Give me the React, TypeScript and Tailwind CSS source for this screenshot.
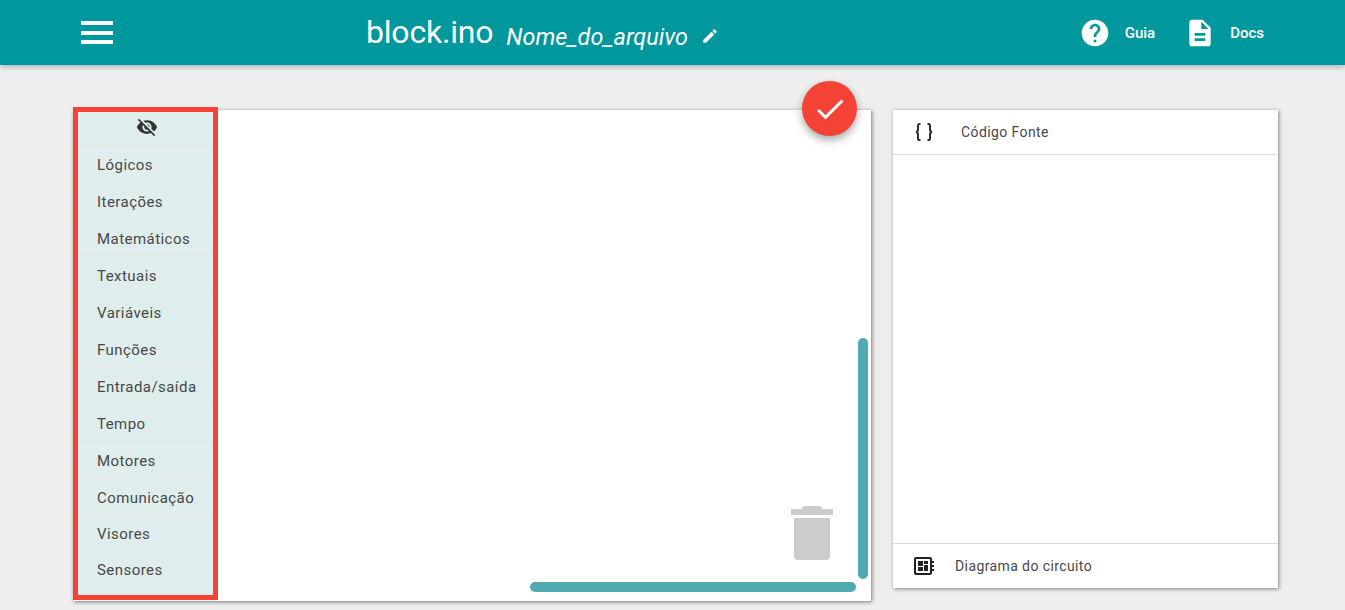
import { MdVisibilityOff, MdEdit, MdHelp, MdDescription, MdCheck, MdDeveloperBoard } from "react-icons/md";

const items = ["Lógicos", "Iterações", "Matemáticos", "Textuais", "Variáveis", "Funções", "Entrada/saída", "Tempo", "Motores", "Comunicação"];

function Braces() {
  return (
    <svg width="18" height="18" viewBox="0 0 18 18" fill="none" stroke="#263238" strokeWidth="2">
      <path d="M5.5 1H4.6C3.6 1 3 1.6 3 2.6V6.6C3 8 2.4 8.8 1 9C2.4 9.2 3 10 3 11.4V15.4C3 16.4 3.6 17 4.6 17H5.5" />
      <path d="M12.5 1H13.4C14.4 1 15 1.6 15 2.6V6.6C15 8 15.6 8.8 17 9C15.6 9.2 15 10 15 11.4V15.4C15 16.4 14.4 17 13.4 17H12.5" />
    </svg>
  );
}

function Row({ label }: { label: string }) {
  return (
    <div className="h-[37px] flex items-center pl-[19px] pt-[4px] border-b border-[#e9e6e6] text-[15px] tracking-[0.45px] text-[#484848]">
      {label}
    </div>
  );
}

export default function App() {
  return (
    <div className="h-[610px] overflow-hidden bg-[#eeeeee] font-['Roboto',sans-serif]">
      <header className="h-[65px] bg-[#00979d] shadow-[0_2px_5px_rgba(0,0,0,0.26)] flex items-center text-white relative">
        <div className="ml-[81px] w-[32px] h-[23px] flex flex-col justify-between">
          <div className="h-[4px] bg-white" />
          <div className="h-[4px] bg-white" />
          <div className="h-[4px] bg-white" />
        </div>
        <div className="ml-[253px] text-[32px] font-normal tracking-[-0.2px] leading-none -mt-[2px]">block.ino</div>
        <div className="ml-[13px] text-[23.4px] italic leading-none mt-[11px]">Nome_do_arquivo</div>
        <MdEdit className="ml-[13px] mt-[6px] text-white" size={18} />
        <div className="ml-auto flex items-center">
          <MdHelp size={32} className="text-white" />
          <span className="ml-[14px] mt-[2px] text-[15px] font-medium">Guia</span>
          <MdDescription size={32} className="ml-[29px] text-white" />
          <span className="ml-[14px] mt-[2px] mr-[81px] text-[15px] font-medium">Docs</span>
        </div>
      </header>
      <main className="flex items-start pl-[73px] pt-[45px]">
        <section className="relative w-[798px] h-[491px] bg-white shadow-[1px_1px_4px_rgba(0,0,0,0.5)]">
          <div className="w-[145px] h-[493px] -mt-[3px] border-[5px] border-[#f44336] bg-[#dfeeed] flex flex-col">
            <div className="h-[33px] flex items-center justify-center border-b border-[#e9e6e6]">
              <MdVisibilityOff size={22} className="text-[#333] -mt-[2px] ml-[2px]" />
            </div>
            {items.map((l) => <Row key={l} label={l} />)}
            <div className="h-[36px] flex items-center pl-[19px] pt-[2px] text-[15px] tracking-[0.45px] text-[#484848]">Visores</div>
            <div className="h-[36px] flex items-center pl-[19px] pt-[2px] text-[15px] tracking-[0.45px] text-[#484848]">Sensores</div>
          </div>
          <div className="absolute left-[729px] -top-[29px] w-[55px] h-[55px] rounded-full bg-[#f44336] shadow-[0_4px_8px_rgba(0,0,0,0.35)] flex items-center justify-center">
            <MdCheck size={36} className="text-white" />
          </div>
          <div className="absolute left-[785px] top-[228px] w-[10px] h-[241px] rounded-full bg-[#4fabaf]" />
          <div className="absolute left-[457px] top-[472px] w-[326px] h-[10px] rounded-full bg-[#4fabaf]" />
          <div className="absolute left-[718px] top-[396px] w-[42px] flex flex-col items-center">
            <div className="w-[20px] h-[3px] rounded-t-[3px] bg-[#cccccc]" />
            <div className="w-[42px] h-[6px] bg-[#cccccc]" />
            <div className="w-[36px] h-[42px] mt-[3px] rounded-b-[4px] bg-[#cccccc]" />
          </div>
        </section>
        <section className="ml-[22px] w-[385px] h-[478px] bg-white shadow-[1px_1px_4px_rgba(0,0,0,0.45)] flex flex-col">
          <div className="h-[45px] flex items-center border-b border-[#dddddd] text-[14px] tracking-[0.4px] text-[#484848]">
            <div className="ml-[22px]"><Braces /></div>
            <span className="ml-[28px]">Código Fonte</span>
          </div>
          <div className="flex-1" />
          <div className="h-[45px] flex items-center border-t border-[#dddddd] text-[14px] tracking-[0.4px] text-[#484848]">
            <MdDeveloperBoard size={24} className="ml-[19px] text-[#212121]" />
            <span className="ml-[19px]">Diagrama do circuito</span>
          </div>
        </section>
      </main>
    </div>
  );
}
